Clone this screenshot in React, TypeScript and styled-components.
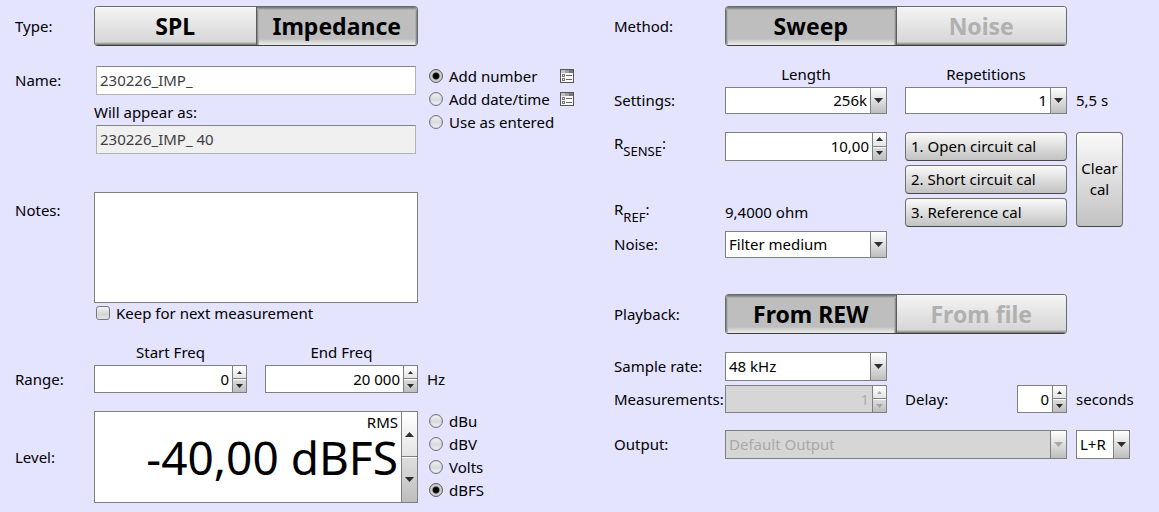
import React, { useId, useState } from "react";
import styled, { createGlobalStyle, css } from "styled-components";

const edge = "#7f7f7f";

const GlobalStyle = createGlobalStyle`
  *, *::before, *::after { box-sizing: border-box; }
  body {
    margin: 0;
    background: #e4e4ff;
    color: #000;
    font: 15px/20px "Noto Sans", sans-serif;
  }
  button, input, select, textarea {
    margin: 0;
    color: inherit;
    font: inherit;
  }
`;

const Page = styled.main`
  display: grid;
  grid-template-columns: minmax(0, 584fr) minmax(0, 530fr);
  gap: 15px;
  padding: 6px 15px;
`;

const Panel = styled.form<{ $labels: number; $side: number }>`
  --columns: ${(p) => p.$labels}px minmax(0, 1fr) ${(p) => p.$side}px;
`;

const Row = styled.div<{ $gap?: number; $align?: "start" | "center" | "end" }>`
  display: grid;
  grid-template-columns: var(--columns);
  align-items: ${(p) => p.$align ?? "center"};
  margin-top: ${(p) => p.$gap ?? 0}px;
`;

const labelText = css<{ $pad?: number }>`
  padding: ${(p) => p.$pad ?? 4}px 0;
  white-space: nowrap;
`;
const Label = styled.label<{ $pad?: number }>`${labelText}`;
const Caption = styled.span<{ $pad?: number }>`${labelText}`;

const Unit = styled.span`
  padding: 4px 0 4px 9px;
  white-space: nowrap;
`;

const Side = styled.div<{ $inset: number }>`
  padding-left: ${(p) => p.$inset}px;
`;

const Pair = styled.div`
  display: grid;
  grid-template-columns: repeat(2, minmax(0, 1fr));
  column-gap: 18px;
  align-items: center;
`;

const Headed = styled.div`
  display: flex;
  flex-direction: column;
  gap: 3px;
`;
const Heading = styled.label`
  text-align: center;
`;

/* Segmented toggle */
const Toggle = styled.div`
  display: flex;
  height: 40px;
  overflow: hidden;
  border: 1px solid #6a6a6a;
  border-bottom-color: #3c3c3c;
  border-radius: 4px;
`;
const Segment = styled.button`
  flex: 1;
  padding: 0;
  border: 0;
  background: linear-gradient(#f4f4f4, #d4d4d4);
  box-shadow: inset 0 -1px #808080, inset 0 -2px #a2a2a2, inset 0 -3px #c4c4c4, inset 0 1px #fafafa;
  color: #000;
  font-size: 23px;
  font-weight: 700;
  line-height: 32px;

  & + & { border-left: 1px solid #5c5c5c; }
  &:disabled { color: #b0b0b0; }
  &[aria-pressed="true"] {
    background: linear-gradient(#bebebe, #bebebe 84%, #d2d2d2 90%, #ececec);
    box-shadow: inset 0 1px #7c7c7c, inset 0 2px #969696, inset 0 3px #aeaeae,
      inset 1px 0 #8c8c8c, inset -1px 0 #8c8c8c, inset 2px 0 #b0b0b0, inset -2px 0 #b0b0b0;
  }
`;

/* Text fields */
const NameFields = styled.div`
  display: flex;
  flex-direction: column;
`;
const NameInput = styled.input`
  width: calc(100% - 4px);
  height: 29px;
  margin: 0 2px;
  padding: 0 3px 1px;
  border: 1px solid #b2b2b2;
  border-top-color: #858585;
  border-radius: 0;
  outline: 0;
  background: #fff;
  color: #404040;

  &:read-only { background: #f0f0f0; }
`;
const Preview = styled.label`
  padding: 7px 0 3px;
`;
const Notes = styled.textarea`
  display: block;
  width: 100%;
  height: 111px;
  padding: 3px;
  border: 1px solid ${edge};
  border-radius: 0;
  outline: 0;
  background: #fff;
  resize: none;
`;

/* Radio buttons and tick box */
const Options = styled.div`
  display: flex;
  flex-direction: column;
  align-self: start;
  gap: 3px;
  width: 156px;
  padding-left: 11px;
`;
const OptionLine = styled.div`
  display: flex;
  align-items: center;
  justify-content: space-between;
`;
const Choice = styled.label<{ $inset?: number }>`
  display: flex;
  align-items: center;
  gap: 6px;
  padding-left: ${(p) => p.$inset ?? 0}px;
  white-space: nowrap;
`;
const Radio = styled.input`
  appearance: none;
  flex: none;
  width: 14px;
  height: 14px;
  border: 1px solid #74747c;
  border-radius: 50%;
  background: linear-gradient(#f4f4f4, #d6d9de 55%, #f4f6f8);
  box-shadow: inset 0 0 1px #9c9ca4;

  &:checked {
    border-color: #5a5a60;
    background: radial-gradient(circle, #000 0 2px, #222 3px, #c8c8c4 4px, #d8d8d4 6px);
  }
`;
const Tick = styled.input`
  appearance: none;
  flex: none;
  width: 14px;
  height: 14px;
  border: 1px solid #77777c;
  border-radius: 3px;
  background: linear-gradient(#f4f4f4, #d4d4d4 60%, #e6e6e6);

  &:checked { box-shadow: inset 0 0 0 3px #e0e0e0, inset 0 0 0 7px #222; }
`;
const IconButton = styled.button`
  display: flex;
  padding: 0;
  border: 0;
  background: none;
`;

/* Drop-down */
const SelectFrame = styled.div`
  display: grid;
  min-width: 0;
`;
const Select = styled.select<{ $height: number; $right?: boolean }>`
  grid-area: 1 / 1;
  appearance: none;
  width: 100%;
  height: ${(p) => p.$height}px;
  padding: 0 19px 1px 3px;
  border: 1px solid ${edge};
  border-radius: 0;
  outline: 0;
  background: #fff;
  text-align-last: ${(p) => (p.$right ? "right" : "left")};

  &:disabled {
    background: #d6d6d6;
    color: #a9a9a9;
    opacity: 1;
  }
`;
const SelectArrow = styled.span`
  grid-area: 1 / 1;
  justify-self: end;
  display: flex;
  align-items: center;
  justify-content: center;
  width: 17px;
  border: 1px solid ${edge};
  background: linear-gradient(#fff, #bebebe);
  pointer-events: none;

  select:disabled + & { color: #9a9a9a; }
`;

/* Spinner */
const SpinFrame = styled.div<{ $height: number; $disabled?: boolean }>`
  display: flex;
  height: ${(p) => p.$height}px;
  min-width: 0;
  border: 1px solid ${edge};
  background: ${(p) => (p.$disabled ? "#d6d6d6" : "#fff")};
`;
const SpinInput = styled.input`
  flex: 1;
  width: 0;
  min-width: 0;
  padding: 0 3px 1px;
  border: 0;
  outline: 0;
  background: none;
  text-align: right;

  &:disabled { color: #b0b0b0; }
`;
const SpinButtons = styled.div<{ $wide?: boolean }>`
  display: grid;
  grid-template-rows: 1fr 1fr;
  width: ${(p) => (p.$wide ? 16 : 14)}px;
  border-left: 1px solid ${edge};
`;
const SpinButton = styled.button`
  display: flex;
  align-items: center;
  justify-content: center;
  min-height: 0;
  padding: 0;
  border: 0;
  background: linear-gradient(#fff, #e4e4e4);

  &:first-child { border-bottom: 1px solid ${edge}; }
  &:last-child {
    background: linear-gradient(#dedede, #bebebe);
    box-shadow: inset 0 1px #fff;
  }
  &:disabled { color: #9a9a9a; }
`;

const LevelText = styled.div`
  display: flex;
  flex: 1;
  flex-direction: column;
  min-width: 0;
  text-align: right;
`;
const LevelKind = styled.label`
  padding: 0 3px;
`;
const LevelInput = styled.input`
  width: 100%;
  height: 50px;
  padding: 0 3px;
  border: 0;
  outline: 0;
  background: none;
  color: #000;
  font-size: 46px;
  line-height: 50px;
  text-align: right;
`;

/* Calibration block */
const CalGrid = styled.div`
  display: grid;
  grid-template-columns: var(--columns);
  margin-top: 18px;
`;
const Lines = styled.div`
  display: grid;
  grid-template-rows: repeat(3, 29px);
  row-gap: 4px;
  align-items: center;
`;
const Symbol = styled.label`
  white-space: nowrap;
  sub {
    font-size: 13px;
    line-height: 18px;
    vertical-align: -7px;
  }
`;
const SymbolText = styled(Symbol).attrs({ as: "span" })``;
const Reading = styled.span`
  padding-bottom: 1px;
`;
const CalButton = styled.button<{ $tall?: boolean }>`
  width: ${(p) => (p.$tall ? "47px" : "100%")};
  height: ${(p) => (p.$tall ? "100%" : "29px")};
  padding: 0 ${(p) => (p.$tall ? 4 : 5)}px 2px;
  border: 1px solid #707070;
  border-bottom-color: #484848;
  border-radius: 4px;
  background: linear-gradient(#fafafa, #c2c2c2);
  line-height: ${(p) => (p.$tall ? 21 : 20)}px;
  text-align: ${(p) => (p.$tall ? "center" : "left")};
`;

const DelayField = styled.div`
  display: flex;
  align-items: center;
  justify-content: space-between;

  ${SpinFrame} { width: 50px; }
`;
const ChannelField = styled.div`
  width: 63px;
  padding-left: 9px;
`;

function Arrow({ up, width }: { up?: boolean; width: number }) {
  const h = (width + 1) / 2;
  const d = up ? `M0 ${h}L${width / 2} 0L${width} ${h}Z` : `M0 0H${width}L${width / 2} ${h}Z`;
  return (
    <svg width={width} height={h} viewBox={`0 0 ${width} ${h}`} aria-hidden="true">
      <path d={d} fill="currentColor" opacity="0.8" />
    </svg>
  );
}

function FormatIcon() {
  return (
    <svg width="14" height="14" viewBox="0 0 14 14" shapeRendering="crispEdges" aria-hidden="true">
      <rect width="14" height="14" fill="#565656" />
      <rect x="1" y="1" width="4" height="3" fill="#c4c4c4" />
      <rect x="5" y="1" width="4" height="3" fill="#a0a0a0" />
      <rect x="9" y="1" width="4" height="3" fill="#787878" />
      <rect x="1" y="4" width="12" height="9" fill="#f8f8f8" />
      {[5, 9].map((y) => (
        <g key={y}>
          <rect x="2" y={y} width="3" height="3" fill="#777" />
          <rect x="3" y={y + 1} width="1" height="1" fill="#fff" />
          <rect x="6" y={y + 1} width="6" height="1" fill="#666" />
        </g>
      ))}
    </svg>
  );
}

interface DropDownProps {
  id?: string;
  label?: string;
  value: string;
  height: number;
  right?: boolean;
  disabled?: boolean;
}
function DropDown({ id, label, value, height, right, disabled }: DropDownProps) {
  return (
    <SelectFrame>
      <Select id={id} aria-label={label} $height={height} $right={right} disabled={disabled}>
        <option>{value}</option>
      </Select>
      <SelectArrow><Arrow width={9} /></SelectArrow>
    </SelectFrame>
  );
}

interface SpinnerProps {
  id: string;
  value: string;
  height: number;
  disabled?: boolean;
}
function Spinner({ id, value, height, disabled }: SpinnerProps) {
  return (
    <SpinFrame $height={height} $disabled={disabled}>
      <SpinInput id={id} defaultValue={value} disabled={disabled} inputMode="decimal" />
      <SpinButtons>
        <SpinButton type="button" aria-label="Increase" disabled={disabled}>
          <Arrow up width={height > 28 ? 7 : 5} />
        </SpinButton>
        <SpinButton type="button" aria-label="Decrease" disabled={disabled}><Arrow width={7} /></SpinButton>
      </SpinButtons>
    </SpinFrame>
  );
}

interface SwitchProps {
  label: string;
  options: string[];
  initial: string;
  disabled?: string;
}
function Switch({ label, options, initial, disabled }: SwitchProps) {
  const [value, setValue] = useState(initial);
  return (
    <Toggle role="group" aria-label={label}>
      {options.map((o) => (
        <Segment
          key={o}
          type="button"
          aria-pressed={o === value}
          disabled={o === disabled}
          onClick={() => setValue(o)}
        >
          {o}
        </Segment>
      ))}
    </Toggle>
  );
}

interface RadiosProps {
  label: string;
  options: { text: string; settings?: boolean }[];
  initial: string;
}
function Radios({ label, options, initial }: RadiosProps) {
  const name = useId();
  return (
    <Options role="radiogroup" aria-label={label}>
      {options.map((o) => (
        <OptionLine key={o.text}>
          <Choice>
            <Radio type="radio" name={name} defaultChecked={o.text === initial} />
            {o.text}
          </Choice>
          {o.settings && (
            <IconButton type="button" aria-label={`${o.text} format`}><FormatIcon /></IconButton>
          )}
        </OptionLine>
      ))}
    </Options>
  );
}

export default function App() {
  return (
    <>
      <GlobalStyle />
      <Page>
        <Panel $labels={79} $side={181}>
          <Row>
            <Caption>Type:</Caption>
            <Switch label="Type" options={["SPL", "Impedance"]} initial="Impedance" />
          </Row>

          <Row $gap={20} $align="start">
            <Label htmlFor="name">Name:</Label>
            <NameFields>
              <NameInput id="name" defaultValue="230226_IMP_" />
              <Preview htmlFor="preview">Will appear as:</Preview>
              <NameInput id="preview" readOnly value="230226_IMP_ 40" />
            </NameFields>
            <Radios
              label="Naming"
              initial="Add number"
              options={[
                { text: "Add number", settings: true },
                { text: "Add date/time", settings: true },
                { text: "Use as entered" },
              ]}
            />
          </Row>

          <Row $gap={38} $align="start">
            <Label htmlFor="notes" $pad={8}>Notes:</Label>
            <div>
              <Notes id="notes" />
              <Choice $inset={2}>
                <Tick type="checkbox" />
                Keep for next measurement
              </Choice>
            </div>
          </Row>

          <Row $gap={19} $align="end">
            <Caption>Range:</Caption>
            <Pair>
              <Headed>
                <Heading htmlFor="start">Start Freq</Heading>
                <Spinner id="start" value="0" height={28} />
              </Headed>
              <Headed>
                <Heading htmlFor="end">End Freq</Heading>
                <Spinner id="end" value="20 000" height={28} />
              </Headed>
            </Pair>
            <Unit>Hz</Unit>
          </Row>

          <Row $gap={18}>
            <Caption>Level:</Caption>
            <SpinFrame $height={92}>
              <LevelText>
                <LevelKind htmlFor="level">RMS</LevelKind>
                <LevelInput id="level" defaultValue="-40,00 dBFS" />
              </LevelText>
              <SpinButtons $wide>
                <SpinButton type="button" aria-label="Increase"><Arrow up width={9} /></SpinButton>
                <SpinButton type="button" aria-label="Decrease"><Arrow width={9} /></SpinButton>
              </SpinButtons>
            </SpinFrame>
            <Radios
              label="Level unit"
              initial="dBFS"
              options={[{ text: "dBu" }, { text: "dBV" }, { text: "Volts" }, { text: "dBFS" }]}
            />
          </Row>
        </Panel>

        <Panel $labels={111} $side={77}>
          <Row>
            <Caption>Method:</Caption>
            <Switch label="Method" options={["Sweep", "Noise"]} initial="Sweep" disabled="Noise" />
          </Row>

          <Row $gap={18} $align="end">
            <Caption>Settings:</Caption>
            <Pair>
              <Headed>
                <Heading htmlFor="length">Length</Heading>
                <DropDown id="length" value="256k" height={27} right />
              </Headed>
              <Headed>
                <Heading htmlFor="reps">Repetitions</Heading>
                <DropDown id="reps" value="1" height={27} right />
              </Headed>
            </Pair>
            <Unit>5,5 s</Unit>
          </Row>

          <CalGrid>
            <Lines>
              <Symbol htmlFor="sense">R<sub>SENSE</sub>:</Symbol>
              <span />
              <SymbolText>R<sub>REF</sub>:</SymbolText>
            </Lines>
            <Pair>
              <Lines>
                <Spinner id="sense" value="10,00" height={29} />
                <span />
                <Reading>9,4000 ohm</Reading>
              </Lines>
              <Lines>
                <CalButton type="button">1. Open circuit cal</CalButton>
                <CalButton type="button">2. Short circuit cal</CalButton>
                <CalButton type="button">3. Reference cal</CalButton>
              </Lines>
            </Pair>
            <Side $inset={9}>
              <CalButton type="button" $tall>Clear cal</CalButton>
            </Side>
          </CalGrid>

          <Row $gap={4} $align="start">
            <Label htmlFor="filter" $pad={3}>Noise:</Label>
            <Pair><DropDown id="filter" value="Filter medium" height={27} /></Pair>
          </Row>

          <Row $gap={36}>
            <Caption>Playback:</Caption>
            <Switch label="Playback" options={["From REW", "From file"]} initial="From REW" disabled="From file" />
          </Row>

          <Row $gap={18} $align="start">
            <Label htmlFor="rate">Sample rate:</Label>
            <Pair><DropDown id="rate" value="48 kHz" height={29} /></Pair>
          </Row>

          <Row $gap={4}>
            <Label htmlFor="count">Measurements:</Label>
            <Pair>
              <Spinner id="count" value="1" height={28} disabled />
              <DelayField>
                <label htmlFor="delay">Delay:</label>
                <Spinner id="delay" value="0" height={28} />
              </DelayField>
            </Pair>
            <Unit>seconds</Unit>
          </Row>

          <Row $gap={17} $align="start">
            <Label htmlFor="output">Output:</Label>
            <DropDown id="output" value="Default Output" height={29} disabled />
            <ChannelField>
              <DropDown label="Output channel" value="L+R" height={29} />
            </ChannelField>
          </Row>
        </Panel>
      </Page>
    </>
  );
}
